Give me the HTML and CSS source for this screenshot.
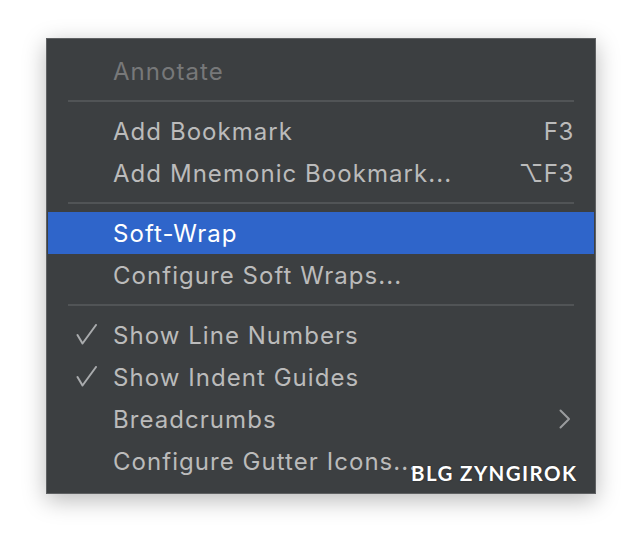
FILE: index.html
```html
<!DOCTYPE html>
<html>
<head>
<meta charset="utf-8">
<link rel="stylesheet" href="styles.css">
</head>
<body>
<div class="menu">
  <div class="item disabled"><span class="label">Annotate</span></div>
  <div class="sep"></div>
  <div class="item"><span class="label">Add Bookmark</span><span class="key">F3</span></div>
  <div class="item"><span class="label">Add Mnemonic Bookmark...</span><span class="key">⌥F3</span></div>
  <div class="sep"></div>
  <div class="item selected"><span class="label">Soft-Wrap</span></div>
  <div class="item"><span class="label">Configure Soft Wraps...</span></div>
  <div class="sep"></div>
  <div class="item"><svg class="check" width="22" height="22" viewBox="0 0 22 22"><path d="M1.5 11 L6.5 19.5 L20 1" fill="none" stroke="#a9abad" stroke-width="2" stroke-linecap="round" stroke-linejoin="round"/></svg><span class="label">Show Line Numbers</span></div>
  <div class="item"><svg class="check" width="22" height="22" viewBox="0 0 22 22"><path d="M1.5 11 L6.5 19.5 L20 1" fill="none" stroke="#a9abad" stroke-width="2" stroke-linecap="round" stroke-linejoin="round"/></svg><span class="label">Show Indent Guides</span></div>
  <div class="item"><span class="label">Breadcrumbs</span><svg class="chev" width="12" height="20" viewBox="0 0 12 20"><path d="M1.5 1.5 L10 10 L1.5 18.5" fill="none" stroke="#9a9c9e" stroke-width="2" stroke-linecap="round" stroke-linejoin="round"/></svg></div>
  <div class="item"><span class="label">Configure Gutter Icons...</span></div>
  <div class="watermark">BLG ZYNGIROK</div>
</div>
</body>
</html>
```

FILE: styles.css
```css
html, body {
  margin: 0;
  padding: 0;
  background: #ffffff;
}
body {
  width: 642px;
  height: 548px;
  overflow: hidden;
}
.menu {
  position: relative;
  box-sizing: border-box;
  width: 550px;
  margin: 38px 0 0 46px;
  padding: 11px 1px;
  background: #3c3f41;
  border: 1px solid #5f6163;
  box-shadow: 0 6px 22px rgba(0, 0, 0, 0.28);
  font-family: "Inter", "Liberation Sans", sans-serif;
  font-size: 24px;
  letter-spacing: 1.05px;
  color: #bbbbbb;
}
.item {
  position: relative;
  height: 42px;
  display: flex;
  align-items: center;
  padding: 0 21px 0 65px;
}
.label {
  flex: 1;
  white-space: nowrap;
}
.key {
  white-space: nowrap;
  letter-spacing: 0.6px;
  margin-right: -1px;
}
.disabled {
  color: #777879;
}
.selected {
  background: #2f65ca;
  color: #ffffff;
}
.check {
  position: absolute;
  left: 28px;
  top: 10px;
}
.chev {
  margin-right: 2px;
}
.sep {
  height: 2px;
  margin: 8px 20px;
  background: #515456;
}
.watermark {
  position: absolute;
  left: 364px;
  top: 422px;
  font-family: "Lato", "Liberation Sans", sans-serif;
  font-weight: 700;
  font-size: 20.5px;
  color: #ffffff;
  letter-spacing: 1.4px;
  text-shadow: 0 0 2px rgba(0,0,0,0.4);
}
```
